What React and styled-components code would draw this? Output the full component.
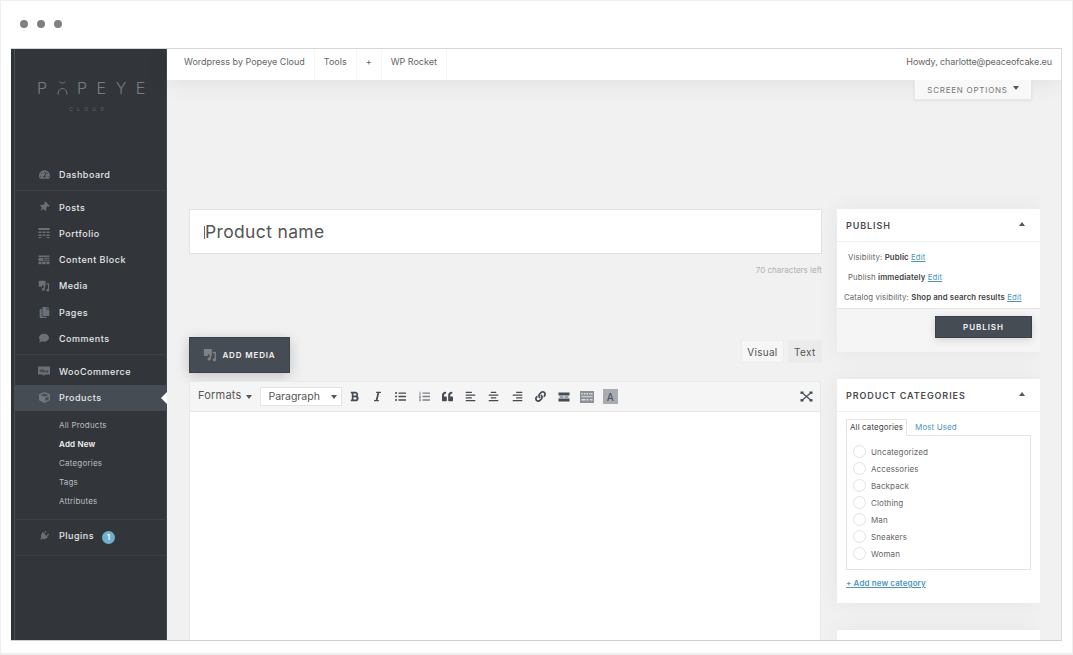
// App.jsx
import React from 'react';
import styled, { createGlobalStyle } from 'styled-components';
import {
  FaTachometerAlt, FaThumbtack, FaComment, FaCopy, FaCube, FaPlug, FaBold, FaItalic,
  FaListUl, FaListOl, FaQuoteLeft, FaAlignLeft, FaAlignCenter, FaAlignRight, FaLink,
} from 'react-icons/fa';

const GlobalStyle = createGlobalStyle`
  html, body { margin: 0; padding: 0; background: #fff; }
  * { box-sizing: border-box; }
  body { font-family: Inter, "Open Sans", sans-serif; color: #555; -webkit-font-smoothing: antialiased; }
`;

const Frame = styled.div`
  width: 1073px;
  height: 655px;
  background: #fff;
  border: 1px solid #efefef;
  border-bottom: 2px solid #efefef;
  overflow: hidden;
`;

const WindowBar = styled.div`
  height: 47px;
  display: flex;
  align-items: center;
  gap: 9px;
  padding: 0 0 2px 19px;
`;

const Dot = styled.span`
  width: 8px;
  height: 8px;
  border-radius: 50%;
  background: #808080;
`;

const Screen = styled.div`
  display: flex;
  width: 1051px;
  height: 593px;
  margin-left: 10px;
  border-top: 1px solid #d6d6d6;
  border-right: 1px solid #dcdcdc;
  border-bottom: 1px solid #d0d0d0;
  overflow: hidden;
`;

const Sidebar = styled.aside`
  width: 156px;
  flex: none;
  background: #32363b;
  border-left: 3px solid #2f3337;
  display: flex;
  flex-direction: column;
  box-shadow: inset 1px 0 0 #4a5056, inset -1px 0 0 #454a50;
`;

const Logo = styled.div`
  height: 109px;
  flex: none;
  padding: 29px 0 0 23px;
  color: #767d83;
`;

const LogoWord = styled.div`
  display: flex;
  align-items: center;
  gap: 9.5px;
  font-size: 16px;
  font-weight: 300;
  line-height: 20px;
`;

const LogoSub = styled.div`
  margin: 7px 0 0 32px;
  font-size: 5px;
  letter-spacing: 4.4px;
  line-height: 8px;
  color: #5f666c;
`;

const MenuGroup = styled.div`
  display: flex;
  flex-direction: column;
  padding: ${(p) => p.$pad || '3px 0 3px'};
  border-bottom: ${(p) => (p.$open ? 'none' : '1px solid #3c4146')};
`;

const MenuRow = styled.div`
  height: 26.2px;
  display: flex;
  align-items: center;
  position: relative;
  padding-left: 24px;
  gap: 9px;
  font-size: 9px;
  font-weight: 500;
  letter-spacing: 0.5px;
  color: #e6e7e8;
  background: ${(p) => (p.$active ? '#464c54' : 'transparent')};
  svg { flex: none; color: ${(p) => (p.$active ? '#6f777f' : '#697077')}; }
`;

const IconSlot = styled.span`
  width: 12px;
  height: 12px;
  display: flex;
  align-items: center;
  justify-content: center;
  transform: rotate(${(p) => p.$tilt || 0}deg);
`;

const Notch = styled.span`
  position: absolute;
  right: 0;
  top: 7px;
  width: 0;
  height: 0;
  border-top: 6px solid transparent;
  border-bottom: 6px solid transparent;
  border-right: 6px solid #fff;
`;

const Badge = styled.span`
  width: 13px;
  height: 13px;
  margin: 3px 0 0 -1px;
  border-radius: 50%;
  background: #6fb0cb;
  color: #fff;
  font-size: 7px;
  font-weight: 700;
  letter-spacing: 0;
  display: flex;
  align-items: center;
  justify-content: center;
`;

const SubMenu = styled.div`
  display: flex;
  flex-direction: column;
  padding: 5px 0 8px 45px;
  border-bottom: 1px solid #3c4146;
`;

const SubItem = styled.div`
  height: 19px;
  display: flex;
  align-items: center;
  font-size: 8px;
  letter-spacing: 0.2px;
  font-weight: ${(p) => (p.$current ? 600 : 400)};
  color: ${(p) => (p.$current ? '#f2f2f2' : '#b9bdc0')};
`;

const Main = styled.main`
  flex: 1;
  min-width: 0;
  display: flex;
  flex-direction: column;
  background: #f1f1f1;
`;

const AdminBar = styled.header`
  height: 31px;
  flex: none;
  background: #fff;
  display: flex;
  align-items: stretch;
  justify-content: space-between;
  padding-right: 9px;
  font-size: 9px;
  color: #666;
  box-shadow: 0 2px 24px rgba(0, 0, 0, 0.08);
  position: relative;
  z-index: 1;
`;

const BarLinks = styled.nav`
  display: flex;
`;

const BarLink = styled.span`
  padding: 0 9px 7px 9px;
  display: flex;
  align-items: center;
  border-right: 1px solid #f5f5f5;
  &:first-child { padding-left: 17px; }
`;

const Howdy = styled.span`
  display: flex;
  align-items: center;
  padding-bottom: 7px;
  letter-spacing: -0.1px;
`;

const ScreenOptions = styled.div`
  flex: none;
  align-self: flex-end;
  width: 118px;
  height: 20px;
  margin-right: 29px;
  background: #f8f8f8;
  border: 1px solid #e6e6e6;
  border-top: none;
  box-shadow: 0 1px 3px rgba(0, 0, 0, 0.06);
  display: flex;
  align-items: center;
  justify-content: center;
  gap: 5px;
  font-size: 8px;
  letter-spacing: 0.75px;
  color: #777;
  position: relative;
  z-index: 2;
`;

const Arrow = styled.span`
  width: 0;
  height: 0;
  margin-top: ${(p) => (p.$mt || 0)}px;
  border-left: ${(p) => p.$size || 3}px solid transparent;
  border-right: ${(p) => p.$size || 3}px solid transparent;
  ${(p) => (p.$up ? 'border-bottom' : 'border-top')}: ${(p) => (p.$size || 3) + 1}px solid ${(p) => p.$color || '#555'};
`;

const Columns = styled.div`
  display: flex;
  align-items: flex-start;
  gap: 15px;
  padding: 109px 0 0 22px;
`;

const EditorColumn = styled.section`
  width: 633px;
  flex: none;
  display: flex;
  flex-direction: column;
`;

const TitleBox = styled.div`
  height: 45px;
  background: #fff;
  border: 1px solid #e2e2e2;
  padding-left: 15px;
  display: flex;
  align-items: center;
  font-size: 17.5px;
  font-weight: 400;
  letter-spacing: 0.35px;
  color: #555;
  position: relative;
`;

const Caret = styled.span`
  position: absolute;
  left: 14px;
  top: 16px;
  width: 1px;
  height: 13px;
  background: #666;
`;

const CharCount = styled.div`
  margin-top: 11px;
  text-align: right;
  font-size: 8px;
  line-height: 10px;
  color: #b0b0b0;
`;

const EditorTop = styled.div`
  height: 45px;
  margin-top: 62px;
  display: flex;
  justify-content: space-between;
  align-items: flex-start;
`;

const MediaButton = styled.button`
  width: 101px;
  height: 36px;
  background: #464c54;
  border: 1px solid #3c4147;
  box-shadow: 0 3px 14px rgba(0, 0, 0, 0.2);
  display: flex;
  align-items: center;
  justify-content: center;
  gap: 5px;
  font-family: inherit;
  font-size: 8px;
  font-weight: 600;
  letter-spacing: 0.85px;
  color: #f2f2f2;
  svg { color: #7d8389; }
`;

const ModeTabs = styled.div`
  display: flex;
  gap: 4px;
  margin-top: 3px;
`;

const ModeTab = styled.span`
  height: 23px;
  padding: 0 ${(p) => (p.$on ? 5 : 5.5)}px;
  display: flex;
  align-items: center;
  font-size: 10px;
  letter-spacing: 0.3px;
  color: #555;
  background: ${(p) => (p.$on ? '#f6f6f6' : '#ebebeb')};
  border: 1px solid #ececec;
`;

const Toolbar = styled.div`
  height: 31px;
  margin-top: -1px;
  width: 632px;
  background: #f5f5f5;
  border: 1px solid #e8e8e8;
  display: flex;
  align-items: center;
  padding: 0 7px 0 8px;
  color: #40464d;
`;

const FormatsLabel = styled.span`
  display: flex;
  align-items: center;
  gap: 5px;
  font-size: 11px;
  letter-spacing: 0.2px;
  color: #555;
  margin: -3px 8px 0 0;
`;

const ParagraphSelect = styled.span`
  width: 82px;
  height: 19px;
  background: #fff;
  border: 1px solid #e4e4e4;
  display: flex;
  align-items: center;
  justify-content: space-between;
  padding: 0 4px 0 7px;
  font-size: 10.5px;
  color: #555;
`;

const ToolButtons = styled.div`
  display: flex;
  align-items: center;
  flex: 1;
  margline-left: 0;
`;

const ToolIcon = styled.span`
  width: 23.3px;
  height: 18px;
  display: flex;
  align-items: center;
  justify-content: center;
  font-size: 11px;
  color: ${(p) => p.$tone || '#454b52'};
`;

const ColorChip = styled.span`
  width: 15px;
  height: 15px;
  margin-left: 4px;
  background: #a9adb1;
  color: #50555b;
  font-size: 10px;
  font-weight: 500;
  display: flex;
  align-items: center;
  justify-content: center;
`;

const EditorBody = styled.div`
  height: 240px;
  width: 632px;
  background: #fff;
  border-left: 1px solid #e8e8e8;
  border-right: 1px solid #e8e8e8;
`;

// la sombra de las cajas se corta justo en el borde derecho
const SideColumn = styled.aside`
  width: 203px;
  flex: none;
  display: flex;
  flex-direction: column;
  gap: 27px;
  clip-path: inset(-40px 0 -40px -40px);
`;

const Box = styled.div`
  background: #fff;
  height: ${(p) => p.$height}px;
  flex: none;
  display: flex;
  flex-direction: column;
  box-shadow: 0 0 22px rgba(0, 0, 0, 0.055);
`;

const BoxHead = styled.div`
  height: 33px;
  flex: none;
  display: flex;
  align-items: center;
  justify-content: space-between;
  padding: 0 15px 0 9px;
  border-bottom: 1px solid #f1f1f1;
  font-size: 9px;
  font-weight: 600;
  letter-spacing: 0.9px;
  color: #4c4c4c;
`;

const PublishBody = styled.div`
  height: 66px;
  display: flex;
  flex-direction: column;
  justify-content: space-between;
  padding: 9px 0 5px 2px;
  font-size: 7.8px;
  letter-spacing: 0.12px;
  color: #666;
  b { font-weight: 600; color: #444; }
`;

const PublishLine = styled.div`
  line-height: 12px;
  white-space: nowrap;
  padding-left: ${(p) => p.$pad ?? 9}px;
`;

const EditLink = styled.a`
  color: #4d96ba;
  text-decoration: underline;
`;

const PublishFoot = styled.div`
  flex: 1;
  background: #f5f5f5;
  border-top: 1px solid #e4e4e4;
  display: flex;
  justify-content: flex-end;
  padding: 7px 8px 0 0;
`;

const PublishButton = styled.button`
  width: 97px;
  height: 22px;
  background: #464c54;
  border: 1px solid #3c4147;
  box-shadow: 0 2px 8px rgba(0, 0, 0, 0.14);
  font-family: inherit;
  font-size: 8px;
  font-weight: 600;
  letter-spacing: 0.95px;
  color: #f2f2f2;
`;

const CatTabs = styled.div`
  display: flex;
  flex: none;
  height: 17px;
  margin: 7px 0 -1px 9px;
  position: relative;
  font-size: 8px;
  letter-spacing: 0.1px;
`;

const CatTab = styled.span`
  padding: 0 ${(p) => (p.$on ? '3px' : '7px')} 2px;
  display: flex;
  align-items: center;
  color: ${(p) => (p.$on ? '#444' : '#4d96ba')};
  background: ${(p) => (p.$on ? '#fff' : 'transparent')};
  border: 1px solid ${(p) => (p.$on ? '#e4e4e4' : 'transparent')};
  border-bottom: 1px solid ${(p) => (p.$on ? '#fff' : 'transparent')};
`;

const CatList = styled.div`
  width: 185px;
  height: 135px;
  flex: none;
  margin-left: 9px;
  border: 1px solid #e4e4e4;
  display: flex;
  flex-direction: column;
  padding: 7px 0 0 6px;
`;

const CatRow = styled.div`
  height: 17px;
  display: flex;
  align-items: center;
  gap: 5px;
  font-size: 8px;
  letter-spacing: 0.1px;
  color: #666;
`;

const Radio = styled.span`
  width: 13px;
  height: 13px;
  border-radius: 50%;
  border: 1px solid #e2e2e2;
  background: #fff;
`;

const AddCategory = styled.a`
  margin: 8px 0 0 9px;
  font-size: 8px;
  font-weight: 600;
  letter-spacing: 0.1px;
  color: #4d96ba;
  text-decoration: underline;
`;

// dibujos que no estan en los paquetes de iconos
const MediaIcon = ({ size = 12, color = 'currentColor' }) => (
  <svg width={size} height={size} viewBox="0 0 16 16" fill={color}>
    <path fillRule="evenodd" d="M1 1h9v8H7.500V7H8V3H3v4h2.500v2H1zM3 3h5v4H3z" />
    <circle cx="7" cy="12.500" r="1.800" />
    <rect x="7.700" y="8" width="1.500" height="4.500" />
    <circle cx="13" cy="13.500" r="1.800" />
    <rect x="13.300" y="5" width="1.500" height="8.500" />
    <rect x="11" y="4.500" width="3.800" height="1.500" />
  </svg>
);

const GridIcon = () => (
  <svg width="12" height="12" viewBox="0 0 12 12" fill="currentColor">
    <rect x="0.5" y="1" width="11" height="2" />
    <rect x="0.5" y="4.5" width="3" height="1.5" />
    <rect x="4.5" y="4.5" width="3" height="1.5" />
    <rect x="8.5" y="4.5" width="3" height="1.5" />
    <rect x="0.5" y="7.5" width="3" height="1.5" />
    <rect x="4.5" y="7.5" width="3" height="1.5" />
    <rect x="8.5" y="7.5" width="3" height="1.5" />
    <rect x="0.5" y="10" width="3" height="1" />
    <rect x="8.5" y="10" width="3" height="1" />
  </svg>
);

const BlockIcon = () => (
  <svg width="12" height="12" viewBox="0 0 12 12" fill="currentColor">
    <rect x="0.5" y="1.5" width="11" height="1.5" />
    <rect x="0.5" y="3.8" width="4.8" height="3" />
    <rect x="6" y="3.8" width="5.5" height="1" />
    <rect x="6" y="5.7" width="5.5" height="1" />
    <rect x="0.5" y="7.6" width="3" height="2.6" />
    <rect x="4.2" y="7.6" width="3.4" height="2.6" />
    <rect x="8.4" y="7.6" width="3.1" height="2.6" />
  </svg>
);

const WooIcon = () => (
  <svg width="12" height="12" viewBox="0 0 12 12" fill="currentColor">
    <path d="M0 1.5h12v8H7.2L6 11 4.8 9.5H0z" />
    <path d="M2 4l.7 3 .8-2 .8 2 .7-3M6 5.5a1 1 0 1 0 .01 0M9 5.5a1 1 0 1 0 .01 0" fill="none" stroke="#32363b" strokeWidth="0.6" />
  </svg>
);

const MoreIcon = () => (
  <svg width="12" height="10" viewBox="0 0 12 10" fill="currentColor">
    <rect x="0.500" y="0.500" width="11" height="3" />
    <rect x="0.500" y="6.500" width="11" height="3" />
    <rect x="1.500" y="4.500" width="4" height="1" />
    <rect x="6.500" y="4.500" width="4" height="1" />
  </svg>
);

const KitchenIcon = () => (
  <svg width="14" height="12" viewBox="0 0 14 12" fill="#8d9196">
    <rect x="0" y="0" width="14" height="12" />
    <g fill="#dcdde0">
      <rect x="1.5" y="2" width="1.5" height="1.5" />
      <rect x="4" y="2" width="1.5" height="1.5" />
      <rect x="6.5" y="2" width="1.5" height="1.5" />
      <rect x="9" y="2" width="1.5" height="1.5" />
      <rect x="11" y="2" width="1.5" height="1.5" />
      <rect x="1.5" y="5.2" width="11" height="1" />
      <rect x="1.5" y="8" width="4" height="1.5" />
      <rect x="6.5" y="8" width="2" height="1.5" />
      <rect x="10" y="8" width="2.5" height="1.5" />
    </g>
  </svg>
);

const ExpandIcon = () => (
  <svg width="13" height="11" viewBox="0 0 13 11" fill="#454b52" stroke="#454b52">
    <path d="M3 2.5l7 6M10 2.5l-7 6" strokeWidth="1.2" fill="none" />
    <rect x="0.5" y="0.5" width="3" height="2.4" stroke="none" />
    <rect x="9.5" y="0.5" width="3" height="2.4" stroke="none" />
    <rect x="0.5" y="8.1" width="3" height="2.4" stroke="none" />
    <rect x="9.5" y="8.1" width="3" height="2.4" stroke="none" />
  </svg>
);

const LogoMark = () => (
  <svg width="11" height="16" viewBox="0 0 11 16" fill="none" stroke="#767d83" strokeWidth="1">
    <path d="M2.500 1.500c.6 2 5.400 2 6 0" />
    <path d="M1 14.500c0-8 9-8 9 0" />
  </svg>
);

const mainMenu = [
  { label: 'Posts', icon: <FaThumbtack size={10} />, tilt: 45 },
  { label: 'Portfolio', icon: <GridIcon /> },
  { label: 'Content Block', icon: <BlockIcon /> },
  { label: 'Media', icon: <MediaIcon /> },
  { label: 'Pages', icon: <FaCopy size={11} /> },
  { label: 'Comments', icon: <FaComment size={10} /> },
];

const productLinks = ['All Products', 'Add New', 'Categories', 'Tags', 'Attributes'];
const categories = ['Uncategorized', 'Accessories', 'Backpack', 'Clothing', 'Man', 'Sneakers', 'Woman'];

const App = () => {
  return (
    <>
      <GlobalStyle />
      <Frame>
        <WindowBar>
          <Dot />
          <Dot />
          <Dot />
        </WindowBar>
        <Screen>
          <Sidebar>
            <Logo>
              <LogoWord>
                <span>P</span>
                <LogoMark />
                <span>P</span>
                <span>E</span>
                <span>Y</span>
                <span>E</span>
              </LogoWord>
              <LogoSub>CLOUD</LogoSub>
            </Logo>
            <MenuGroup>
              <MenuRow>
                <IconSlot><FaTachometerAlt size={11} /></IconSlot>
                Dashboard
              </MenuRow>
            </MenuGroup>
            <MenuGroup>
              {mainMenu.map((item) => (
                <MenuRow key={item.label}>
                  <IconSlot $tilt={item.tilt}>{item.icon}</IconSlot>
                  {item.label}
                </MenuRow>
              ))}
            </MenuGroup>
            <MenuGroup $pad="3px 0 0" $open>
              <MenuRow>
                <IconSlot><WooIcon /></IconSlot>
                WooCommerce
              </MenuRow>
              <MenuRow $active>
                <IconSlot><FaCube size={11} /></IconSlot>
                Products
                <Notch />
              </MenuRow>
            </MenuGroup>
            <SubMenu>
              {productLinks.map((link) => (
                <SubItem key={link} $current={link === 'Add New'}>{link}</SubItem>
              ))}
            </SubMenu>
            <MenuGroup $pad="3px 0 6px">
              <MenuRow>
                <IconSlot $tilt={45}><FaPlug size={10} /></IconSlot>
                Plugins
                <Badge>1</Badge>
              </MenuRow>
            </MenuGroup>
          </Sidebar>
          <Main>
            <AdminBar>
              <BarLinks>
                <BarLink>Wordpress by Popeye Cloud</BarLink>
                <BarLink>Tools</BarLink>
                <BarLink>+</BarLink>
                <BarLink>WP Rocket</BarLink>
              </BarLinks>
              <Howdy>Howdy, charlotte@peaceofcake.eu</Howdy>
            </AdminBar>
            <ScreenOptions>
              SCREEN OPTIONS
              <Arrow $mt={-3} />
            </ScreenOptions>
            <Columns>
              <EditorColumn>
                <TitleBox>
                  <Caret />
                  Product name
                </TitleBox>
                <CharCount>70 characters left</CharCount>
                <EditorTop>
                  <MediaButton>
                    <MediaIcon size={14} />
                    ADD MEDIA
                  </MediaButton>
                  <ModeTabs>
                    <ModeTab $on>Visual</ModeTab>
                    <ModeTab>Text</ModeTab>
                  </ModeTabs>
                </EditorTop>
                <Toolbar>
                  <FormatsLabel>
                    Formats
                    <Arrow $mt={3} $color="#555" />
                  </FormatsLabel>
                  <ParagraphSelect>
                    Paragraph
                    <Arrow $color="#555" />
                  </ParagraphSelect>
                  <ToolButtons>
                    <ToolIcon><FaBold /></ToolIcon>
                    <ToolIcon><FaItalic /></ToolIcon>
                    <ToolIcon><FaListUl /></ToolIcon>
                    <ToolIcon $tone="#7a7f85"><FaListOl /></ToolIcon>
                    <ToolIcon><FaQuoteLeft /></ToolIcon>
                    <ToolIcon><FaAlignLeft /></ToolIcon>
                    <ToolIcon><FaAlignCenter /></ToolIcon>
                    <ToolIcon><FaAlignRight /></ToolIcon>
                    <ToolIcon><FaLink size={11} /></ToolIcon>
                    <ToolIcon><MoreIcon /></ToolIcon>
                    <ToolIcon><KitchenIcon /></ToolIcon>
                    <ColorChip>A</ColorChip>
                  </ToolButtons>
                  <ExpandIcon />
                </Toolbar>
                <EditorBody />
              </EditorColumn>
              <SideColumn>
                <Box $height={143}>
                  <BoxHead>
                    PUBLISH
                    <Arrow $up $mt={-3} />
                  </BoxHead>
                  <PublishBody>
                    <PublishLine>Visibility: <b>Public</b> <EditLink>Edit</EditLink></PublishLine>
                    <PublishLine>Publish <b>immediately</b> <EditLink>Edit</EditLink></PublishLine>
                    <PublishLine $pad={5}>Catalog visibility: <b>Shop and search results</b> <EditLink>Edit</EditLink></PublishLine>
                  </PublishBody>
                  <PublishFoot>
                    <PublishButton>PUBLISH</PublishButton>
                  </PublishFoot>
                </Box>
                <Box $height={224}>
                  <BoxHead>
                    PRODUCT CATEGORIES
                    <Arrow $up $mt={-3} />
                  </BoxHead>
                  <CatTabs>
                    <CatTab $on>All categories</CatTab>
                    <CatTab>Most Used</CatTab>
                  </CatTabs>
                  <CatList>
                    {categories.map((name) => (
                      <CatRow key={name}>
                        <Radio />
                        {name}
                      </CatRow>
                    ))}
                  </CatList>
                  <AddCategory>+ Add new category</AddCategory>
                </Box>
                <Box $height={20} />
              </SideColumn>
            </Columns>
          </Main>
        </Screen>
      </Frame>
    </>
  );
};

export default App;
